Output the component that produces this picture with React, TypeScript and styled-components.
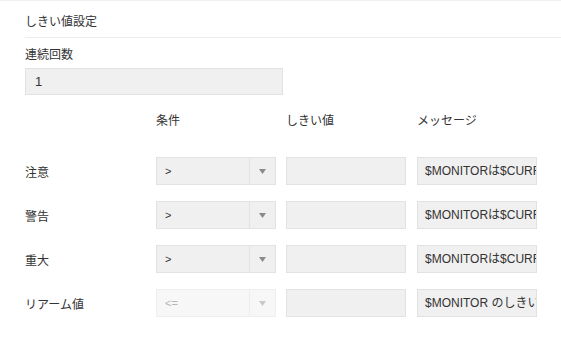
import React from 'react';
import styled, { createGlobalStyle } from 'styled-components';

const GlobalStyle = createGlobalStyle`
  body {
    margin: 0;
    background: #ffffff;
    font-family: "Liberation Sans", "Noto Sans CJK JP", sans-serif;
    color: #333333;
  }
`;

const Page = styled.div`
  width: 561px;
  height: 358px;
  border-top: 1px solid #f2f2f2;
  box-sizing: border-box;
  padding-left: 25px;
`;

const Header = styled.div`
  height: 37px;
  display: flex;
  align-items: center;
  padding-top: 2px;
  box-sizing: border-box;
  border-bottom: 1px solid #ececec;
  font-size: 12px;
  color: #333;
`;

const FieldLabel = styled.div`
  margin-top: 9px;
  height: 16px;
  line-height: 16px;
  font-size: 12px;
`;

const CountInput = styled.div`
  margin-top: 5px;
  width: 258px;
  height: 27px;
  box-sizing: border-box;
  background: #f0f0f0;
  border: 1px solid #e2e2e2;
  font-size: 13px;
  line-height: 25px;
  padding-left: 9px;
`;

const Grid = styled.div`
  display: grid;
  grid-template-columns: 121px 120px 121px 120px;
  column-gap: 10px;
  row-gap: 16px;
  margin-top: 12px;
  align-items: center;
`;

const ColHead = styled.div`
  height: 28px;
  line-height: 28px;
  font-size: 12px;
  margin-bottom: 6px;
`;

const RowLabel = styled.div`
  font-size: 12px;
`;

const Select = styled.div<{ $disabled?: boolean }>`
  display: flex;
  height: 28px;
  box-sizing: border-box;
  background: ${(p) => (p.$disabled ? '#f7f7f7' : '#f0f0f0')};
  border: 1px solid ${(p) => (p.$disabled ? '#eeeeee' : '#e2e2e2')};
  color: ${(p) => (p.$disabled ? '#b5b5b5' : '#333')};
  font-size: 11px;
`;

const SelectValue = styled.div`
  flex: 1;
  padding-left: 8px;
  line-height: 26px;
`;

const Arrow = styled.div<{ $disabled?: boolean }>`
  width: 25px;
  border-left: 1px solid ${(p) => (p.$disabled ? '#eeeeee' : '#e2e2e2')};
  display: flex;
  align-items: center;
  justify-content: center;
  svg {
    fill: ${(p) => (p.$disabled ? '#c8c8c8' : '#8a8a8a')};
  }
`;

const TextBox = styled.div<{ $narrow?: boolean }>`
  width: 120px;
  height: 28px;
  box-sizing: border-box;
  background: #f0f0f0;
  border: 1px solid #e2e2e2;
  font-size: 12px;
  line-height: 26px;
  padding-left: 7px;
  white-space: nowrap;
  overflow: hidden;
`;

type Row = { label: string; op: string; message: string; disabled?: boolean };

const rows: Row[] = [
  { label: '注意', op: '>', message: '$MONITORは$CURRENT' },
  { label: '警告', op: '>', message: '$MONITORは$CURRENT' },
  { label: '重大', op: '>', message: '$MONITORは$CURRENT' },
  { label: 'リアーム値', op: '<=', message: '$MONITOR のしきい値', disabled: true },
];

const App: React.FC = () => {
  return (
    <>
      <GlobalStyle />
      <Page>
        <Header>しきい値設定</Header>
        <FieldLabel>連続回数</FieldLabel>
        <CountInput>1</CountInput>
        <Grid>
          <ColHead />
          <ColHead>条件</ColHead>
          <ColHead>しきい値</ColHead>
          <ColHead>メッセージ</ColHead>
          {rows.map((r) => (
            <React.Fragment key={r.label}>
              <RowLabel>{r.label}</RowLabel>
              <Select $disabled={r.disabled}>
                <SelectValue>{r.op}</SelectValue>
                <Arrow $disabled={r.disabled}>
                  <svg width="7" height="5" viewBox="0 0 7 5">
                    <path d="M0 0 L7 0 L3.5 5 Z" />
                  </svg>
                </Arrow>
              </Select>
              <TextBox />
              <TextBox>{r.message}</TextBox>
            </React.Fragment>
          ))}
        </Grid>
      </Page>
    </>
  );
};

export default App;
